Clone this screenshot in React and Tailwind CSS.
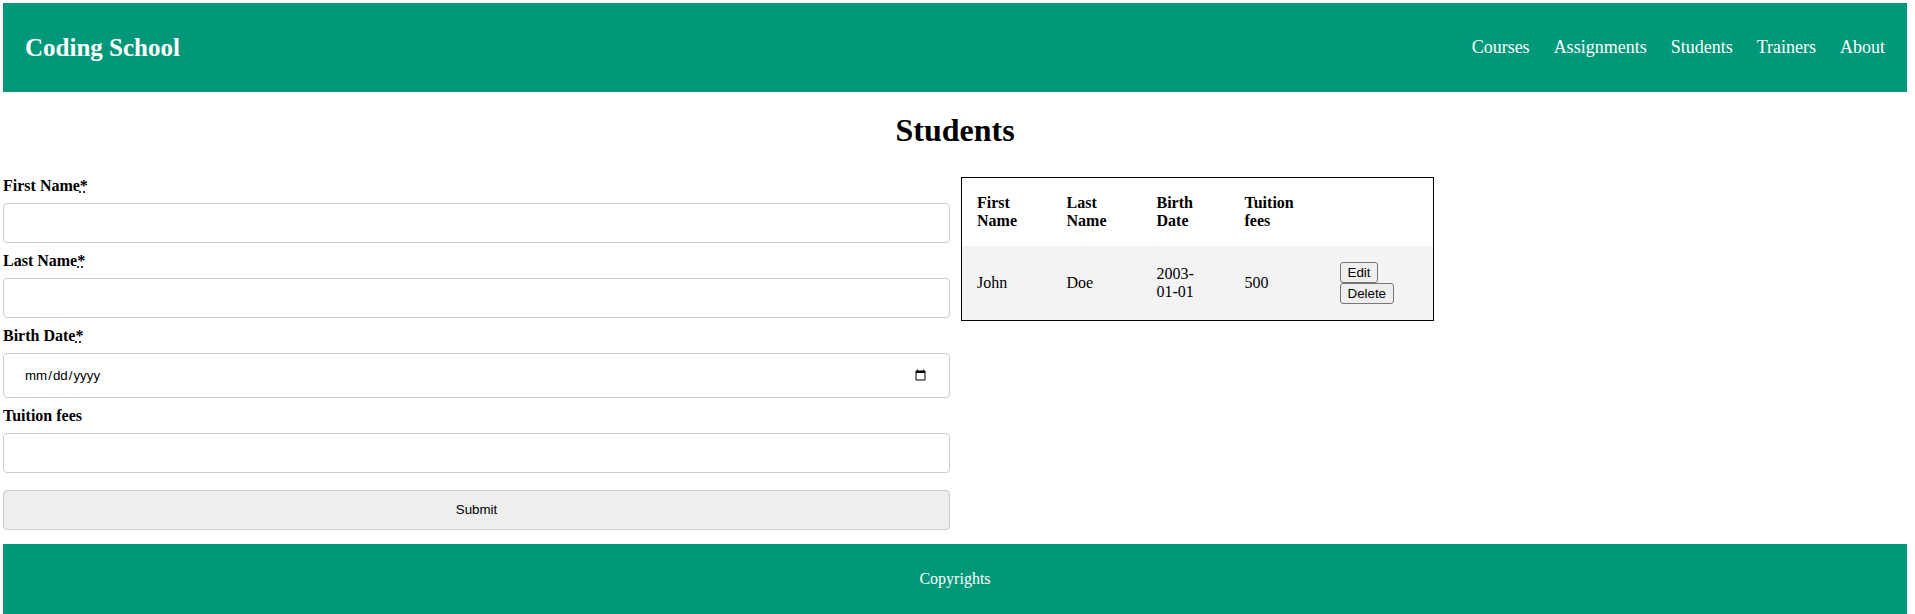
import React from "react";

function Field({ label, required, type = "text", tall }) {
  return (
    <>
      <label className="block font-bold text-[16px] leading-[19px]">
        {label}
        {required && <abbr title="required">*</abbr>}
      </label>
      <input
        type={type}
        className={`block w-full my-2 border border-[#cccccc] rounded-[4px] px-5 bg-white text-[13.33px] font-['Liberation_Sans',Arial,sans-serif] text-black ${tall ? "h-[45px]" : "h-[40px]"}`}
      />
    </>
  );
}

function SmallButton({ children }) {
  return (
    <button className="h-[21px] px-[7px] border border-[#767676] rounded-[3px] bg-[#efefef] text-[13.33px] leading-[15px] font-['Liberation_Sans',Arial,sans-serif] text-black">
      {children}
    </button>
  );
}

export default function App() {
  return (
    <div className="pl-[3px] pr-[8px] pt-[3px] font-['Liberation_Serif','Times_New_Roman',serif] text-black bg-white">
      <header className="h-[89px] bg-[#009879] text-white flex items-center justify-between px-[22px]">
        <h1 className="text-[25px] font-bold leading-[29px]">Coding School</h1>
        <nav className="flex gap-6 text-[18px] leading-[21px]">
          <a>Courses</a>
          <a>Assignments</a>
          <a>Students</a>
          <a>Trainers</a>
          <a>About</a>
        </nav>
      </header>

      <h2 className="text-[32px] font-bold text-center leading-[37px] mt-[20px] mb-[27px]">
        Students
      </h2>

      <div className="flex items-start gap-[11px]">
        <form className="w-[947px] shrink-0" onSubmit={(e) => e.preventDefault()}>
          <Field label="First Name" required />
          <Field label="Last Name" required />
          <Field label="Birth Date" required type="date" tall />
          <Field label="Tuition fees" />
          <button
            type="submit"
            className="block w-full h-[40px] mt-[17px] border border-[#cccccc] rounded-[4px] bg-[#eeeeee] text-[13.33px] font-['Liberation_Sans',Arial,sans-serif] text-black"
          >
            Submit
          </button>
        </form>

        <table className="mt-[1px] w-[473px] table-fixed border-collapse border border-black text-[16px]">
          <thead>
            <tr className="bg-white">
              <th className="w-[90px] px-[15px] py-4 text-left align-middle font-bold leading-[18px]">First Name</th>
              <th className="w-[90px] px-[15px] py-4 text-left align-middle font-bold leading-[18px]">Last Name</th>
              <th className="w-[88px] px-[15px] py-4 text-left align-middle font-bold leading-[18px]">Birth Date</th>
              <th className="w-[95px] px-[15px] py-4 text-left align-middle font-bold leading-[18px]">Tuition fees</th>
              <th className="px-[15px] py-4"></th>
            </tr>
          </thead>
          <tbody>
            <tr className="bg-[#f3f3f3]">
              <td className="px-[15px] py-4 align-middle leading-[18px]">John</td>
              <td className="px-[15px] py-4 align-middle leading-[18px]">Doe</td>
              <td className="px-[15px] py-4 align-middle leading-[18px]">2003-01-01</td>
              <td className="px-[15px] py-4 align-middle leading-[18px]">500</td>
              <td className="px-[15px] py-4 align-middle">
                <div className="flex flex-col items-start">
                  <SmallButton>Edit</SmallButton>
                  <SmallButton>Delete</SmallButton>
                </div>
              </td>
            </tr>
          </tbody>
        </table>
      </div>

      <footer className="mt-[14px] bg-[#009879] text-white text-center text-[16px] leading-[18px] pt-[26px] pb-[30px]">
        Copyrights
      </footer>
    </div>
  );
}
